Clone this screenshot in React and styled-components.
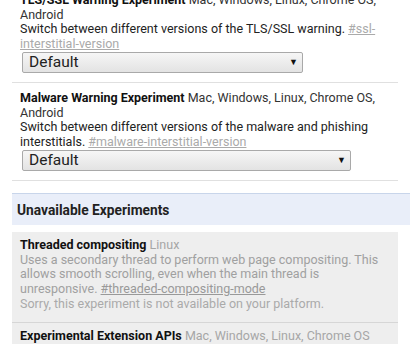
import React from "react";
import styled, { createGlobalStyle } from "styled-components";

const Global = createGlobalStyle`
  html, body { margin: 0; padding: 0; background: #fff; }
  body { font-family: Roboto, "Noto Sans", "Liberation Sans", sans-serif; font-size: 12.5px; color: #222; overflow: hidden; }
`;

const Page = styled.div`
  margin-top: -15px;
  padding: 0 12px;
  width: 410px;
  box-sizing: border-box;
`;

const Experiment = styled.div`
  padding: ${(p) => (p.$unsupported ? "6px 8px 10px" : "8px 8px 9px")};
  border-bottom: 1px solid ${(p) => (p.$unsupported ? "#d6d6d6" : "#e0e0e0")};
  background: ${(p) => (p.$unsupported ? "#eeeeee" : "transparent")};
  color: ${(p) => (p.$unsupported ? "#a0a0a0" : "#222")};
  line-height: 14.5px;
`;

const Name = styled.span`
  font-weight: bold;
  color: #111;
`;

const Platforms = styled.span`
  color: ${(p) => (p.$muted ? "#a6a6a6" : "#333")};
`;

const Desc = styled.div``;

const Link = styled.a`
  color: ${(p) => (p.$dark ? "#999" : "#aaa")};
  text-decoration: underline;
`;

const Note = styled.div`
  color: #aaa;
  margin-top: 1px;
`;

const Select = styled.div`
  display: flex;
  align-items: center;
  justify-content: space-between;
  box-sizing: border-box;
  margin: 1px 0 0 2px;
  height: 21px;
  width: ${(p) => p.$width}px;
  padding: 0 4px 0 6px;
  border: 1px solid #a9a9a9;
  border-radius: 2px;
  background: linear-gradient(#f6f6f6, #e3e3e3);
  font-size: 15.5px;
  color: #222;
  line-height: 19px;
`;

const Arrow = styled.span`
  font-size: 9px;
  color: #111;
`;

const SectionHeader = styled.div`
  margin: 12px -12px 7px 0;
  height: 31px;
  display: flex;
  align-items: center;
  padding-left: 5px;
  background: #e9eef9;
  border-top: 1px solid #c8d5ea;
  font-weight: bold;
  font-size: 13.75px;
  color: #222;
`;

const Unsupported = styled.div``;

export default function App() {
  return (
    <>
      <Global />
      <Page>
        <Experiment>
          <Name>TLS/SSL Warning Experiment</Name>{" "}
          <Platforms>Mac, Windows, Linux, Chrome OS, Android</Platforms>
          <Desc>
            Switch between different versions of the TLS/SSL warning.{" "}
            <Link href="#">#ssl-interstitial-version</Link>
          </Desc>
          <Select $width={281}>
            <span>Default</span>
            <Arrow>▼</Arrow>
          </Select>
        </Experiment>
        <Experiment>
          <Name>Malware Warning Experiment</Name>{" "}
          <Platforms>Mac, Windows, Linux, Chrome OS, Android</Platforms>
          <Desc>
            Switch between different versions of the malware and phishing
            interstitials. <Link href="#">#malware-interstitial-version</Link>
          </Desc>
          <Select $width={329}>
            <span>Default</span>
            <Arrow>▼</Arrow>
          </Select>
        </Experiment>
        <SectionHeader>Unavailable Experiments</SectionHeader>
        <Unsupported>
          <Experiment $unsupported>
            <Name>Threaded compositing</Name> <Platforms $muted>Linux</Platforms>
            <Desc>
              Uses a secondary thread to perform web page compositing. This
              allows smooth scrolling, even when the main thread is
              unresponsive. <Link $dark href="#">#threaded-compositing-mode</Link>
            </Desc>
            <Note>Sorry, this experiment is not available on your platform.</Note>
          </Experiment>
          <Experiment $unsupported>
            <Name>Experimental Extension APIs</Name>{" "}
            <Platforms $muted>Mac, Windows, Linux, Chrome OS</Platforms>
            <Desc>
              Enables experimental extension APIs. Note that the extension
              gallery doesn't allow you to upload extensions that use
              experimental APIs.
            </Desc>
          </Experiment>
        </Unsupported>
      </Page>
    </>
  );
}
